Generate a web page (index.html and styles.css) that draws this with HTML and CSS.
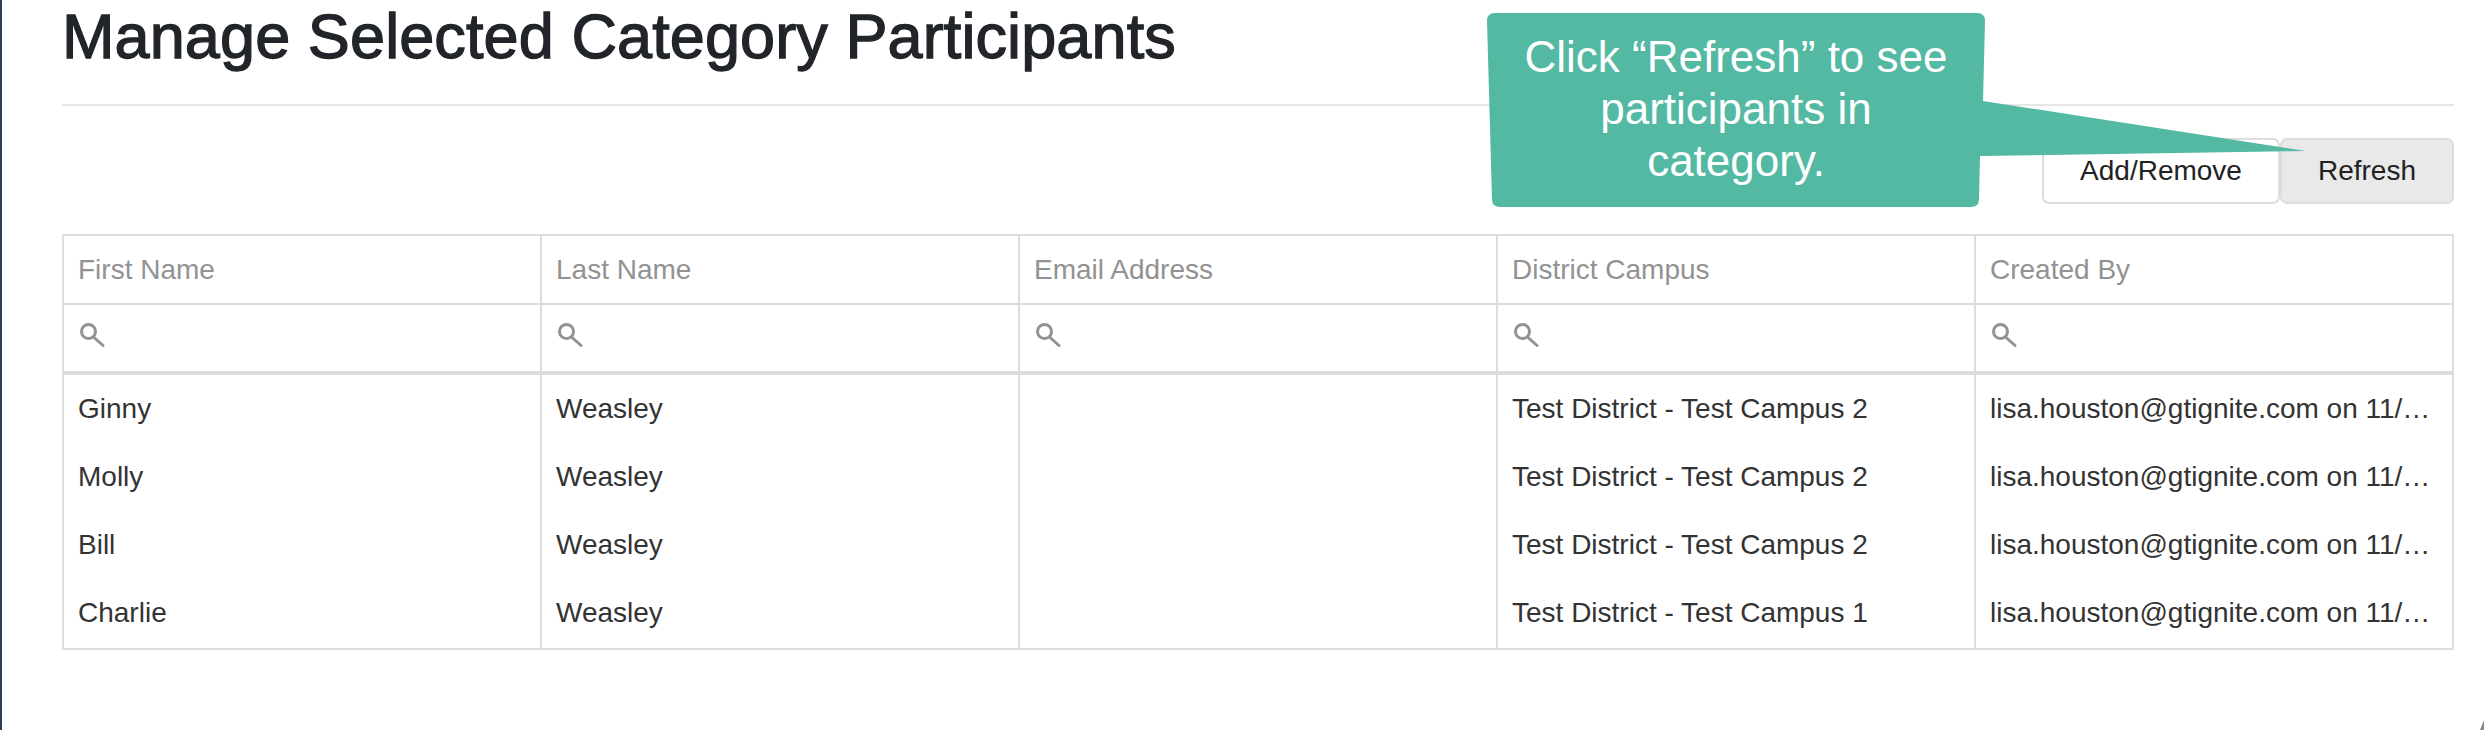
FILE: index.html
```html
<!DOCTYPE html>
<html lang="en">
<head>
    <meta charset="UTF-8">
    <title>Manage Selected Category Participants</title>
    <link rel="stylesheet" href="styles.css">
</head>
<body>
    <div class="page">
        <h1>Manage Selected Category Participants</h1>

        <div class="toolbar">
            <button class="btn">Add/Remove</button>
            <button class="btn active">Refresh</button>
        </div>

        <table class="grid">
            <thead>
                <tr class="titles">
                    <th>First Name</th>
                    <th>Last Name</th>
                    <th>Email Address</th>
                    <th>District Campus</th>
                    <th>Created By</th>
                </tr>
                <tr class="filters">
                    <th><svg class="search" viewBox="0 0 28 28"><circle cx="11.5" cy="11.5" r="7"/><path d="M16.5 17L26 25.5"/></svg></th>
                    <th><svg class="search" viewBox="0 0 28 28"><circle cx="11.5" cy="11.5" r="7"/><path d="M16.5 17L26 25.5"/></svg></th>
                    <th><svg class="search" viewBox="0 0 28 28"><circle cx="11.5" cy="11.5" r="7"/><path d="M16.5 17L26 25.5"/></svg></th>
                    <th><svg class="search" viewBox="0 0 28 28"><circle cx="11.5" cy="11.5" r="7"/><path d="M16.5 17L26 25.5"/></svg></th>
                    <th><svg class="search" viewBox="0 0 28 28"><circle cx="11.5" cy="11.5" r="7"/><path d="M16.5 17L26 25.5"/></svg></th>
                </tr>
            </thead>
            <tbody>
                <tr>
                    <td>Ginny</td>
                    <td>Weasley</td>
                    <td></td>
                    <td>Test District - Test Campus 2</td>
                    <td>lisa.houston@gtignite.com on 11/…</td>
                </tr>
                <tr>
                    <td>Molly</td>
                    <td>Weasley</td>
                    <td></td>
                    <td>Test District - Test Campus 2</td>
                    <td>lisa.houston@gtignite.com on 11/…</td>
                </tr>
                <tr>
                    <td>Bill</td>
                    <td>Weasley</td>
                    <td></td>
                    <td>Test District - Test Campus 2</td>
                    <td>lisa.houston@gtignite.com on 11/…</td>
                </tr>
                <tr>
                    <td>Charlie</td>
                    <td>Weasley</td>
                    <td></td>
                    <td>Test District - Test Campus 1</td>
                    <td>lisa.houston@gtignite.com on 11/…</td>
                </tr>
            </tbody>
        </table>
    </div>

    <!-- tutorial callout sits over the page -->
    <div class="callout">
        <svg class="callout-shape" viewBox="0 0 830 205">
            <path d="M9 1H491Q499 1 499 9L497 89L820 139L494 144L493 187Q493 195 485 195H14Q6 195 6 187L1 9Q1 1 9 1Z"/>
        </svg>
        <p>Click “Refresh” to see participants in category.</p>
    </div>

    <!-- bit of the window corner showing at the bottom right -->
    <svg class="corner" viewBox="0 0 4 10"><path d="M4 0V10H0Z"/></svg>
</body>
</html>
```

FILE: styles.css
```css
html, body {
    margin: 0;
    height: 100%;
}
body {
    font-family: "Liberation Sans", Arial, sans-serif;
    background: #fff;
    color: #333;
    border-left: 2px solid #2c3e50;
    box-sizing: border-box;
    overflow: hidden;
}
.page {
    padding: 0 30px 0 60px;
}
h1 {
    margin: 0;
    height: 106px;
    box-sizing: border-box;
    font-size: 63px;
    line-height: 72px;
    letter-spacing: 0.1px;
    font-weight: normal;
    color: #212529;
    -webkit-text-stroke: 1.3px #212529;
    border-bottom: 2px solid #e6e6e6;
}
.toolbar {
    display: flex;
    justify-content: flex-end;
    margin-top: 32px;
    height: 66px;
}
.btn {
    font-family: inherit;
    font-size: 28px;
    color: #222;
    background: #fff;
    border: 2px solid #ddd;
    border-radius: 7px;
    padding: 0 36px;
    margin: 0;
}
.btn.active {
    background: #e9e9e9;
}
.grid {
    width: 100%;
    margin-top: 30px;
    border-collapse: collapse;
    table-layout: fixed;
    border: 2px solid #ddd;
    font-size: 28px;
}
.grid th, .grid td {
    border-left: 2px solid #ddd;
    padding: 0 14px;
    text-align: left;
    font-weight: normal;
    white-space: nowrap;
}
.titles th {
    height: 67px;
    color: #929292;
    border-bottom: 2px solid #ddd;
}
.filters th {
    height: 66px;
    border-bottom: 4px solid #ddd;
}
.grid td {
    height: 68px;
    color: #333;
}
.grid tbody tr:last-child td {
    height: 67px;
    padding-bottom: 2px;
}
.search {
    display: block;
    width: 28px;
    height: 28px;
    margin-bottom: 8px;
    margin-left: -1px;
    fill: none;
    stroke: #929292;
    stroke-width: 3;
    stroke-linecap: round;
}
.callout {
    position: absolute;
    left: 1486px;
    top: 12px;
    width: 830px;
    height: 205px;
}
.callout-shape {
    position: absolute;
    left: 0;
    top: 0;
    width: 830px;
    height: 205px;
    fill: #53b9a2;
}
.callout p {
    position: relative;
    margin: 0 0 0 35px;
    width: 430px;
    padding-top: 19px;
    text-align: center;
    font-size: 44px;
    line-height: 52px;
    color: #fff;
}
.corner {
    position: absolute;
    right: 0;
    bottom: 0;
    width: 4px;
    height: 10px;
    fill: #888;
}
```
